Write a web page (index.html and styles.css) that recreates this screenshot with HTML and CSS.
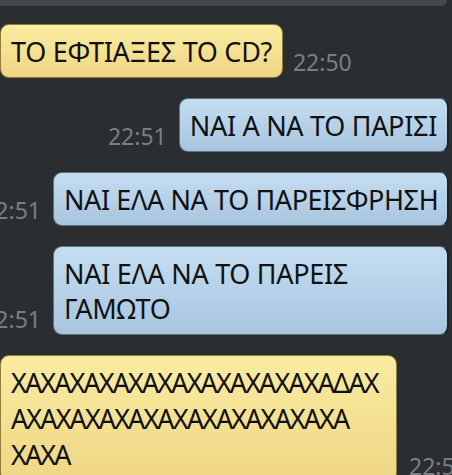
FILE: index.html
```html
<!DOCTYPE html>
<html lang="el">
<head>
<meta charset="utf-8">
<link rel="stylesheet" href="styles.css">
</head>
<body>
<div class="topbar"></div>
<div class="chat">
  <div class="row in">
    <div class="bubble yellow">ΤΟ ΕΦΤΙΑΞΕΣ ΤΟ CD?</div>
    <div class="time">22:50</div>
  </div>
  <div class="row out">
    <div class="time">22:51</div>
    <div class="bubble blue">ΝΑΙ Α ΝΑ ΤΟ ΠΑΡΙΣΙ</div>
  </div>
  <div class="row out">
    <div class="time">22:51</div>
    <div class="bubble blue wide nowrap">ΝΑΙ ΕΛΑ ΝΑ ΤΟ ΠΑΡΕΙΣΦΡΗΣΗ</div>
  </div>
  <div class="row out">
    <div class="time">22:51</div>
    <div class="bubble blue wide">ΝΑΙ ΕΛΑ ΝΑ ΤΟ ΠΑΡΕΙΣ ΓΑΜΩΤΟ</div>
  </div>
  <div class="row in">
    <div class="bubble yellow laugh">ΧΑΧΑΧΑΧΑΧΑΧΑΧΑΧΑΧΑΧΑΧΑΔΑΧ<br>ΑΧΑΧΑΧΑΧΑΧΑΧΑΧΑΧΑΧΑΧΑΧΑ<br>ΧΑΧΑ</div>
    <div class="time">22:51</div>
  </div>
</div>
</body>
</html>
```
FILE: styles.css
```css
html, body {
  margin: 0;
  padding: 0;
  width: 452px;
  height: 475px;
  overflow: hidden;
  background: #2a2e30;
  font-family: "Noto Sans", "Open Sans", sans-serif;
}
.topbar {
  width: 447px;
  height: 6px;
  background: #45494b;
  border-bottom-right-radius: 6px;
}
.chat {
  display: flex;
  flex-direction: column;
  gap: 20px;
  padding-top: 18px;
}
.row {
  display: flex;
  align-items: flex-end;
}
.row.in {
  justify-content: flex-start;
  gap: 10px;
}
.row.out {
  justify-content: flex-end;
  gap: 12px;
  padding-right: 3px;
}
.bubble {
  box-sizing: border-box;
  max-width: 396px;
  font-size: 27px;
  line-height: 35px;
  letter-spacing: -0.3px;
  color: #111;
  padding: 9px 10px 8px 10px;
  border-radius: 9px;
  flex-shrink: 0;
}
.wide {
  width: 396px;
}
.nowrap {
  white-space: nowrap;
  letter-spacing: -0.4px;
}
.yellow {
  background: linear-gradient(#faeca2, #efd684);
  border: 1px solid #8f7d3a;
}
.laugh {
  width: 397px;
  max-width: 397px;
  line-height: 36px;
  letter-spacing: -1.9px;
  white-space: nowrap;
  padding-top: 9px;
}
.row.in:last-child {
  gap: 12px;
}
.blue {
  background: linear-gradient(#c4ddf1, #a8c5df);
  border: 1px solid #5d7385;
  border-right: 2px solid #1d2226;
}
.time {
  flex-shrink: 0;
  font-size: 23px;
  line-height: 23px;
  color: #7b7e80;
  margin-bottom: 4px;
  white-space: nowrap;
}
```
